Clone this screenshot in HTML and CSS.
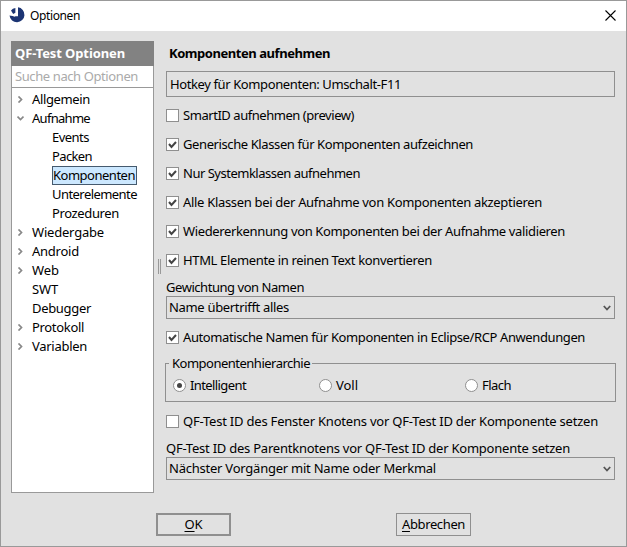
FILE: index.html
```html
<!DOCTYPE html>
<html lang="de">
<head>
<meta charset="utf-8">
<title>Optionen</title>
<link rel="stylesheet" href="styles.css">
</head>
<body>
<div class="window">
  <header class="titlebar">
    <svg class="logo" width="16" height="16" viewBox="0 0 16 16"><path d="M9 .3A7.500 7.500 0 1 1 .5 8.600L5 9.200h4z" fill="#1b3473"/><path d="M2 3.500A6 6 0 0 1 6.400 1v4.800L4.200 7z" fill="#1b3473"/><path d="M8.100.6v6.800L4.600 9" fill="none" stroke="#fff" stroke-width="1.600"/></svg>
    <span class="caption"><span data-w="50">Optionen</span></span>
    <svg class="close" width="11" height="11" viewBox="0 0 11 11"><path d="M.5.5l10 10M10.500.5l-10 10" stroke="#000" stroke-width="1.100"/></svg>
  </header>
  <div class="content">
    <aside class="sidebar">
      <h1><span data-w="110">QF-Test Optionen</span></h1>
      <div class="search"><span data-w="123">Suche nach Optionen</span></div>
      <ul class="tree">
        <li class="closed"><span data-w="58">Allgemein</span></li>
        <li class="open"><span data-w="58">Aufnahme</span></li>
        <li class="child"><span data-w="37">Events</span></li>
        <li class="child"><span data-w="40">Packen</span></li>
        <li class="child selected"><b><span data-w="82">Komponenten</span></b></li>
        <li class="child"><span data-w="85">Unterelemente</span></li>
        <li class="child"><span data-w="67">Prozeduren</span></li>
        <li class="closed"><span data-w="72">Wiedergabe</span></li>
        <li class="closed"><span data-w="47">Android</span></li>
        <li class="closed"><span data-w="27">Web</span></li>
        <li><span data-w="26">SWT</span></li>
        <li><span data-w="59">Debugger</span></li>
        <li class="closed"><span data-w="52">Protokoll</span></li>
        <li class="closed"><span data-w="55">Variablen</span></li>
      </ul>
    </aside>
    <div class="splitter"></div>
    <main>
      <h2><span data-w="161">Komponenten aufnehmen</span></h2>
      <div class="hotkey"><span data-w="231">Hotkey für Komponenten: Umschalt-F11</span></div>
      <div class="checks">
        <div class="check"><i></i><span data-w="171">SmartID aufnehmen (preview)</span></div>
        <div class="check on"><i></i><span data-w="290">Generische Klassen für Komponenten aufzeichnen</span></div>
        <div class="check on"><i></i><span data-w="177">Nur Systemklassen aufnehmen</span></div>
        <div class="check on"><i></i><span data-w="359">Alle Klassen bei der Aufnahme von Komponenten akzeptieren</span></div>
        <div class="check on"><i></i><span data-w="382">Wiedererkennung von Komponenten bei der Aufnahme validieren</span></div>
        <div class="check on"><i></i><span data-w="249">HTML Elemente in reinen Text konvertieren</span></div>
      </div>
      <div class="label"><span data-w="138">Gewichtung von Namen</span></div>
      <div class="combo"><span data-w="120">Name übertrifft alles</span></div>
      <div class="check on auto"><i></i><span data-w="402">Automatische Namen für Komponenten in Eclipse/RCP Anwendungen</span></div>
      <section class="group">
        <div class="legend"><b><span data-w="138">Komponentenhierarchie</span></b></div>
        <div class="radios">
          <div class="radio on"><i></i><span data-w="56">Intelligent</span></div>
          <div class="radio"><i></i><span data-w="22">Voll</span></div>
          <div class="radio"><i></i><span data-w="29">Flach</span></div>
        </div>
      </section>
      <div class="check window-id"><i></i><span data-w="415">QF-Test ID des Fenster Knotens vor QF-Test ID der Komponente setzen</span></div>
      <div class="label parent"><span data-w="404">QF-Test ID des Parentknotens vor QF-Test ID der Komponente setzen</span></div>
      <div class="combo"><span data-w="267">Nächster Vorgänger mit Name oder Merkmal</span></div>
    </main>
  </div>
  <footer>
    <div class="button default"><span data-w="18"><u>O</u>K</span></div>
    <div class="button"><span data-w="63"><u>A</u>bbrechen</span></div>
  </footer>
</div>
<script src="ui.js"></script>
</body>
</html>
```
FILE: styles.css
```css
* { box-sizing: border-box; }
body { margin: 0; font: 13px/19px "Noto Sans", sans-serif; color: #000; }
.window { width: 627px; height: 547px; border: 1px solid #999; background: #e1e1e1; display: flex; flex-direction: column; white-space: nowrap; }
.titlebar { height: 30px; background: #fff; display: flex; align-items: center; padding: 0 10px 2px 8px; }
.caption { flex: 1; margin-left: 5px; padding-top: 1px; font-size: 12px; }
.content { display: flex; height: 462px; padding: 10px 11px 0 10px; }
.sidebar { width: 143px; height: 452px; border: 1px solid #999; background: #fff; }
h1 { margin: -1px -1px 0; height: 25px; padding: 0 4px; background: #828282; color: #fff; font-size: 13px; line-height: 25px; }
.search { height: 22px; border-bottom: 1px solid #999; padding-left: 3px; color: #aaa; line-height: 21px; }
.tree { list-style: none; margin: 2px 0 0; padding: 0; }
.tree li { height: 19px; display: flex; align-items: center; padding-left: 20px; }
.tree .child { padding-left: 40px; }
.tree .closed, .tree .open { padding-left: 5px; }
.tree svg { flex: none; margin-right: 8px; }
.tree .selected b { width: 85px; height: 19px; line-height: 17px; font-weight: normal; border: 1px solid #455a6e; background: #cce8ff; }
.splitter { width: 3px; height: 15px; margin: 218px 5px 0 4px; border: 1px solid #999; border-width: 0 1px; }
main { flex: 1; }
h2 { margin: 3px 0 0 3px; height: 19px; font-size: 13px; line-height: 19px; }
.hotkey { height: 26px; margin-top: 8px; border: 1px solid #8f8f8f; padding-left: 3px; line-height: 24px; }
.checks { display: grid; gap: 10px; margin-top: 9px; }
.check { height: 19px; display: flex; align-items: center; gap: 4px; }
.check i { width: 13px; height: 13px; border: 1px solid #8f8f8f; background: #fff; display: flex; align-items: center; justify-content: center; }
.label { height: 19px; margin-top: 7px; line-height: 21px; }
.combo { height: 23px; border: 1px solid #8f8f8f; padding: 0 3px 0 2px; line-height: 21px; display: flex; align-items: center; justify-content: space-between; }
.check.auto { margin-top: 9px; }
.group { height: 39px; margin: 16px -1px 0; border: 1px solid #8f8f8f; }
.legend { height: 12px; margin-left: 3px; display: flex; align-items: flex-start; }
.legend b { width: 143px; height: 19px; margin-top: -10px; padding-left: 3px; background: #e1e1e1; font-weight: normal; }
.radios { display: grid; grid-template-columns: 146px 146px 1fr; padding-left: 7px; }
.radio { height: 19px; display: flex; align-items: center; gap: 4px; }
.radio i { width: 13px; height: 13px; border: 1px solid #8f8f8f; border-radius: 50%; background: #fff; display: flex; align-items: center; justify-content: center; }
.radio.on i::after { content: ""; width: 5px; height: 5px; border-radius: 50%; background: #444; }
.window-id { margin-top: 10px; }
.label.parent { margin-top: 7px; }
footer { display: flex; gap: 165px; padding: 20px 0 0 155px; }
.button { width: 75px; height: 23px; border: 1px solid #8f8f8f; display: flex; align-items: center; justify-content: center; }
.button.default { border-width: 2px; }
u { text-underline-offset: 2px; text-decoration-thickness: 1px; }
```
FILE: ui.js
```js
function icon(w, h, d, color, width) {
  return `<svg width="${w}" height="${h}" viewBox="0 0 ${w} ${h}"><path d="${d}" fill="none" stroke="${color}" stroke-width="${width}"/></svg>`;
}
document.querySelectorAll('.tree .closed').forEach(e => e.insertAdjacentHTML('afterbegin', icon(7, 7, 'M1.5.5l3 3-3 3', '#888', 1.7)));
document.querySelectorAll('.tree .open').forEach(e => e.insertAdjacentHTML('afterbegin', icon(7, 7, 'M.5 1.5l3 3 3-3', '#888', 1.7)));
document.querySelectorAll('.check.on i').forEach(e => e.innerHTML = icon(9, 9, 'M1 4l2.500 3 4.500-5', '#444', 2));
document.querySelectorAll('.combo').forEach(e => e.insertAdjacentHTML('beforeend', icon(8, 6, 'M.8 1l3.200 3.500 3.200-3.500', '#555', 1.8)));

// Track each label so that it fills its nominal width
document.querySelectorAll('[data-w]').forEach(e => {
  const extra = e.dataset.w - e.getBoundingClientRect().width;
  e.style.letterSpacing = extra / e.textContent.length + 'px';
});
```
